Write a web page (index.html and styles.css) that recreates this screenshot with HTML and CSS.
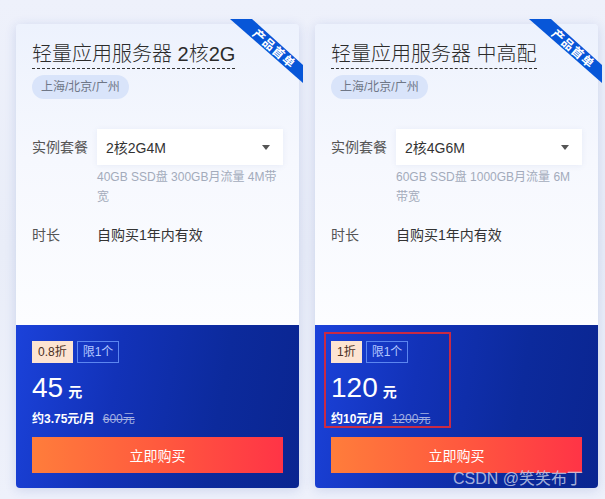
FILE: index.html
```html
<!DOCTYPE html>
<html lang="zh-CN">
<head>
<meta charset="utf-8">
<title>轻量应用服务器</title>
<link rel="stylesheet" href="styles.css">
</head>
<body>
<div class="page">
  <div class="card">
    <div class="ribbon"><span>产品首单</span></div>
    <div class="card-top">
      <h3 class="title"><span>轻量应用服务器 2核2G</span></h3>
      <div class="regions">上海/北京/广州</div>
      <div class="form">
        <div class="row">
          <div class="label">实例套餐</div>
          <div class="field">
            <div class="select"><span>2核2G4M</span><i class="caret"></i></div>
            <div class="desc">40GB SSD盘 300GB月流量 4M带宽</div>
          </div>
        </div>
        <div class="row row-gap">
          <div class="label">时长</div>
          <div class="value">自购买1年内有效</div>
        </div>
      </div>
    </div>
    <div class="card-buy">
      <div class="badges"><span class="badge discount">0.8折</span><span class="badge limit">限1个</span></div>
      <div class="price"><span class="num">45</span><span class="unit">元</span></div>
      <div class="sub"><span class="monthly">约3.75元/月</span><s class="orig">600元</s></div>
      <button class="buy">立即购买</button>
    </div>
  </div>

  <div class="card">
    <div class="ribbon"><span>产品首单</span></div>
    <div class="card-top">
      <h3 class="title"><span>轻量应用服务器 中高配</span></h3>
      <div class="regions">上海/北京/广州</div>
      <div class="form">
        <div class="row">
          <div class="label">实例套餐</div>
          <div class="field">
            <div class="select"><span>2核4G6M</span><i class="caret"></i></div>
            <div class="desc">60GB SSD盘 1000GB月流量 6M带宽</div>
          </div>
        </div>
        <div class="row row-gap">
          <div class="label">时长</div>
          <div class="value">自购买1年内有效</div>
        </div>
      </div>
    </div>
    <div class="card-buy">
      <div class="badges"><span class="badge discount">1折</span><span class="badge limit">限1个</span></div>
      <div class="price"><span class="num">120</span><span class="unit">元</span></div>
      <div class="sub"><span class="monthly">约10元/月</span><s class="orig">1200元</s></div>
      <button class="buy">立即购买</button>
    </div>
    <div class="highlight"></div>
  </div>
</div>
<div class="watermark">CSDN @笑笑布丁</div>
</body>
</html>
```

FILE: styles.css
```css
html, body {
  margin: 0;
  padding: 0;
}
body {
  width: 605px;
  height: 499px;
  overflow: hidden;
  position: relative;
  background: linear-gradient(180deg, #eef1fb 0%, #e9edf8 50%, #eef1fb 100%);
  font-family: "Liberation Sans", "Noto Sans CJK SC", sans-serif;
  color: #333;
}
.page {
  display: grid;
  grid-template-columns: 283px 283px;
  column-gap: 16px;
  padding: 24px 0 0 16px;
}
.card {
  position: relative;
  height: 464px;
  display: flex;
  flex-direction: column;
  border-radius: 4px;
  box-shadow: 0 2px 12px rgba(40, 70, 160, 0.16);
}
.card-top {
  flex: 1;
  display: flex;
  flex-direction: column;
  align-items: flex-start;
  padding: 16px 16px 0 16px;
  border-radius: 4px 4px 0 0;
  background: linear-gradient(180deg, #edf2fd 0%, #f6f8fe 45%, #fcfdff 100%);
}
.title {
  display: flex;
  margin: 0;
  font-size: 20px;
  font-weight: 300;
  line-height: 28px;
  color: #2b2b2b;
}
.title span {
  border-bottom: 1px dashed #333;
}
.regions {
  margin-top: 6px;
  height: 24px;
  line-height: 24px;
  padding: 0 9px;
  border-radius: 12px;
  background: #d9e4fa;
  color: #6f7787;
  font-size: 12px;
}
.form {
  align-self: stretch;
  margin-top: 30px;
}
.row {
  display: flex;
  align-items: flex-start;
}
.row-gap {
  margin-top: 10px;
}
.label {
  width: 65px;
  flex: none;
  line-height: 36px;
  font-size: 14px;
  color: #555;
}
.value {
  line-height: 36px;
  font-size: 14px;
  color: #333;
}
.field {
  width: 186px;
}
.select {
  height: 36px;
  display: flex;
  align-items: center;
  justify-content: space-between;
  padding: 0 13px 0 9px;
  background: #fff;
  box-shadow: 0 1px 6px rgba(60, 90, 170, 0.08);
  font-size: 14px;
  color: #333;
}
.caret {
  width: 0;
  height: 0;
  border-left: 4px solid transparent;
  border-right: 4px solid transparent;
  border-top: 5px solid #555;
}
.desc {
  margin-top: 2px;
  max-width: 182px;
  font-size: 12px;
  line-height: 20px;
  color: #a3abbb;
}
.card-buy {
  flex: none;
  padding: 16px 16px 15px 16px;
  border-radius: 0 0 4px 4px;
  background: linear-gradient(100deg, #1b42da 0%, #1232b8 35%, #0c2a9c 70%, #0a2590 100%);
}
.badges {
  display: flex;
  gap: 4px;
}
.badge {
  height: 20px;
  line-height: 20px;
  padding: 0 5px;
  font-size: 12px;
  border: 1px solid transparent;
}
.discount {
  background: #fde4d2;
  border-color: #fde4d2;
  color: #4b2f22;
}
.limit {
  border-color: #5c86f0;
  color: #b4c7ff;
}
.price {
  margin-top: 11px;
  display: flex;
  align-items: baseline;
  gap: 5px;
  color: #fff;
}
.num {
  font-size: 28px;
  line-height: 28px;
}
.unit {
  font-size: 14px;
  line-height: 14px;
  font-weight: 700;
}
.sub {
  margin-top: 5px;
  height: 20px;
  display: flex;
  align-items: center;
  font-size: 12px;
}
.monthly {
  color: #fff;
  font-weight: 700;
}
.orig {
  margin-left: 8px;
  color: #a4b1e2;
}
.buy {
  display: block;
  margin-top: 10px;
  width: 100%;
  height: 36px;
  border: none;
  padding: 0;
  background: linear-gradient(90deg, #ff7d3b 0%, #ff5a3e 50%, #ff3446 100%);
  color: #fff;
  font-family: inherit;
  font-size: 14px;
}
.ribbon {
  position: absolute;
  top: -5px;
  right: -4px;
  width: 73px;
  height: 64px;
  background: #0756d8;
  clip-path: polygon(0 0, 22px 0, 100% 46px, 100% 100%);
}
.ribbon span {
  position: absolute;
  left: 44px;
  top: 30px;
  transform: translate(-50%, -50%) rotate(41deg);
  white-space: nowrap;
  font-size: 12px;
  line-height: 12px;
  font-weight: 700;
  letter-spacing: 1px;
  color: #fff;
}
.highlight {
  position: absolute;
  left: 9px;
  top: 308px;
  width: 127px;
  height: 96px;
  box-sizing: border-box;
  border: 2px solid #c92a44;
}
.watermark {
  position: absolute;
  left: 453px;
  top: 470px;
  font-size: 16px;
  line-height: 18px;
  color: rgba(205, 212, 235, 0.8);
  white-space: nowrap;
}
```
